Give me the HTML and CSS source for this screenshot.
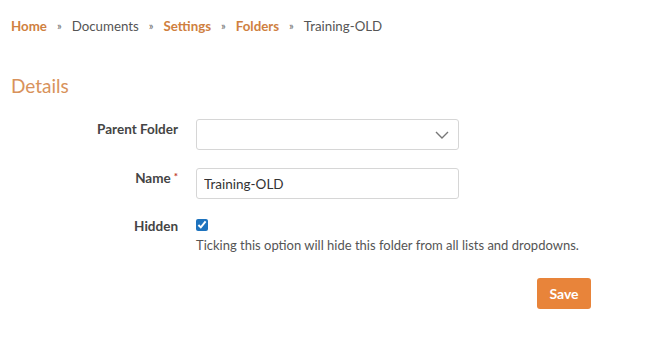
FILE: index.html
```html
<!DOCTYPE html>
<html lang="en">
<head>
    <meta charset="UTF-8">
    <meta name="viewport" content="width=device-width, initial-scale=1.0">
    <title>Folder Details</title>
    <link rel="stylesheet" href="styles.css">
</head>
<body>
    <div class="page">
        <nav class="breadcrumb">
            <a href="#">Home</a>
            <span class="sep">&raquo;</span>
            <span>Documents</span>
            <span class="sep">&raquo;</span>
            <a href="#">Settings</a>
            <span class="sep">&raquo;</span>
            <a href="#">Folders</a>
            <span class="sep">&raquo;</span>
            <span>Training-OLD</span>
        </nav>

        <h2 class="section-title">Details</h2>

        <form class="details-form">
            <div class="form-row">
                <label class="form-label" for="parent">Parent Folder</label>
                <div class="form-control">
                    <div class="select-box" id="parent">
                        <svg class="chevron" width="14" height="8" viewBox="0 0 14 8">
                            <path d="M1 1 L7 7 L13 1" fill="none" stroke="#777" stroke-width="1.4"/>
                        </svg>
                    </div>
                </div>
            </div>

            <div class="form-row">
                <label class="form-label" for="name">Name<span class="req">*</span></label>
                <div class="form-control">
                    <input type="text" id="name" class="text-input" value="Training-OLD">
                </div>
            </div>

            <div class="form-row row-hidden">
                <label class="form-label" for="hidden">Hidden</label>
                <div class="form-control">
                    <input type="checkbox" id="hidden" class="check" checked>
                    <p class="help">Ticking this option will hide this folder from all lists and dropdowns.</p>
                </div>
            </div>

            <div class="form-actions">
                <button type="button" class="btn-save">Save</button>
            </div>
        </form>
    </div>
</body>
</html>
```

FILE: styles.css
```css
* {
  box-sizing: border-box;
  margin: 0;
  padding: 0;
}

body {
  font-family: 'Lato', 'Liberation Sans', sans-serif;
  font-size: 13px;
  color: #555;
  background-color: #fff;
}

.page {
  width: 591px;
  padding: 16px 0 0 11px;
}

.breadcrumb {
  display: flex;
  align-items: center;
  line-height: 20px;
  font-size: 13.3px;
  color: #555;
}

.breadcrumb a {
  color: #cf8040;
  font-weight: bold;
  text-decoration: none;
}

.breadcrumb .sep {
  font-size: 11px;
  color: #666;
  margin: 0 10px;
}

.section-title {
  margin-top: 38px;
  font-size: 19px;
  font-weight: normal;
  line-height: 24px;
  color: #d8925b;
}

.details-form {
  margin-top: 21px;
}

.form-row {
  display: grid;
  grid-template-columns: 167px 263px;
  column-gap: 18px;
  align-items: start;
  margin-bottom: 18px;
}

.form-label {
  text-align: right;
  font-size: 13.5px;
  font-weight: bold;
  color: #444;
  line-height: 20px;
}

.req {
  color: #c0392b;
  font-size: 10px;
  vertical-align: top;
  margin-left: 3px;
  position: relative;
  top: -2px;
}

.select-box {
  position: relative;
  height: 31px;
  border: 1px solid #d6d6d6;
  border-radius: 3px;
  background: #fff;
}

.chevron {
  position: absolute;
  right: 9px;
  top: 11px;
}

.text-input {
  display: block;
  width: 100%;
  height: 31px;
  padding: 0 7px;
  border: 1px solid #d6d6d6;
  border-radius: 3px;
  font-family: inherit;
  font-size: 13.5px;
  color: #333;
}

.row-hidden {
  margin-top: 20px;
}

.row-hidden .form-label {
  margin-top: -3px;
}

.check {
  display: block;
  width: 12px;
  height: 12px;
  margin: 0;
  accent-color: #1e73be;
}

.help {
  margin-top: 4px;
  line-height: 20px;
  white-space: nowrap;
  color: #555;
}

.form-actions {
  display: flex;
  justify-content: flex-end;
  margin-top: 23px;
}

.btn-save {
  width: 54px;
  height: 31px;
  border: none;
  border-radius: 3px;
  background-color: #e8843a;
  color: #fff;
  font-family: inherit;
  font-size: 14px;
  font-weight: bold;
  cursor: pointer;
}
```
